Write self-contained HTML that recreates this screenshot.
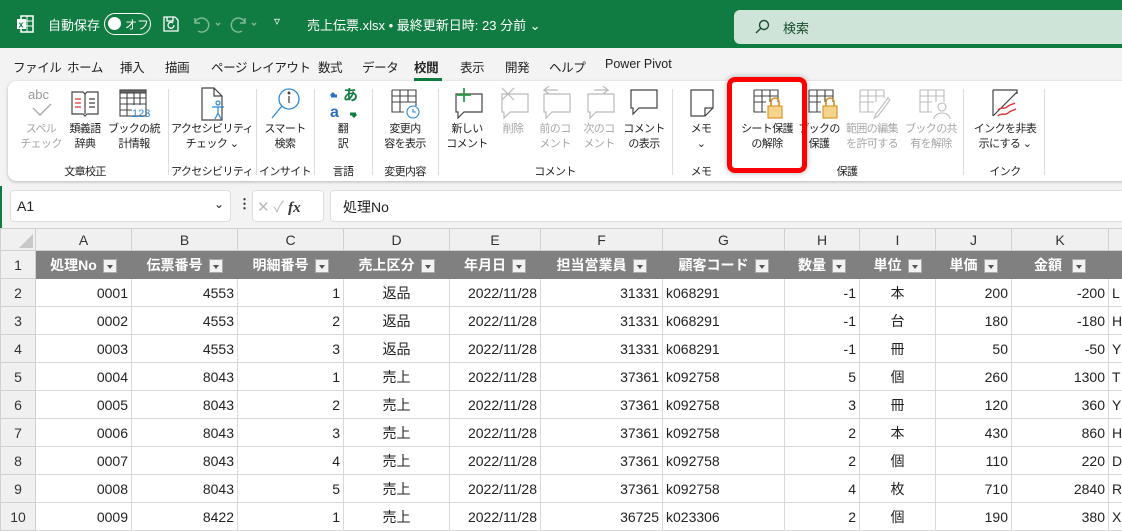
<!DOCTYPE html>
<html><head><meta charset="utf-8">
<style>
*{box-sizing:border-box;margin:0;padding:0}
body{width:1122px;height:530px;overflow:hidden;background:#f3f3f3;font-family:"Liberation Sans","Noto Sans CJK JP",sans-serif;position:relative;color:#222}
.abs{position:absolute}
#title{left:0;top:0;width:1122px;height:48px;background:#107c41;color:#fff;font-size:13px}
#tabs{left:0;top:48px;width:1122px;height:32px;font-size:12.5px;color:#222;letter-spacing:-0.4px}
#tabs span{position:absolute;top:9px}
#ribbon{left:8px;top:81px;width:1130px;height:100px;background:#fff;border-radius:8px;box-shadow:0 1px 3px rgba(0,0,0,.25)}
.btn{position:absolute;top:122px;font-size:11px;letter-spacing:-0.6px;line-height:15px;text-align:center;white-space:nowrap;transform:translateX(-50%);color:#222}
.g{color:#a6a6a6}
.grp{position:absolute;top:163px;font-size:11px;letter-spacing:-0.6px;transform:translateX(-50%);white-space:nowrap;color:#222}
.sep{position:absolute;top:89px;width:1px;height:86px;background:#ddd}
.ic{position:absolute;top:86px}
table{position:absolute;left:0;top:228px;width:1128px;border-collapse:collapse;table-layout:fixed;font-size:14px;background:#fff}
td{border:1px solid #d9d9d9;height:28px;padding:0 3px;white-space:nowrap;overflow:hidden;color:#222}
tr.ch td{height:22px;background:#f0f0f0;text-align:center;color:#333;border-color:#d0d0d0}
td.rh{background:#f0f0f0;text-align:center;color:#333;border-color:#d0d0d0}
tr.hd td.c{background:#808080;color:#fff;font-weight:bold;text-align:center;border-color:#808080}
.fb{display:inline-block;width:14px;height:14px;background:#f2f2f2;border:1px solid #aaa;vertical-align:middle;margin-left:6px;position:relative}
.fb:after{content:"";position:absolute;left:3px;top:5px;border-left:3px solid transparent;border-right:3px solid transparent;border-top:4px solid #555}
.r{text-align:right}.c2{text-align:center}
</style></head><body>
<div id="title" class="abs">
 <svg class="abs" style="left:16px;top:15px" width="18" height="18" viewBox="0 0 18 18"><rect x="5" y="1" width="12" height="16" fill="none" stroke="#fff" stroke-width="1.5"/><line x1="11" y1="1" x2="11" y2="17" stroke="#fff"/><line x1="5" y1="6" x2="17" y2="6" stroke="#fff"/><line x1="5" y1="11" x2="17" y2="11" stroke="#fff"/><rect x="1" y="4" width="9" height="10" fill="#fff"/><text x="2.5" y="12.5" font-size="9" font-weight="bold" fill="#107c41" font-family="Liberation Sans">x</text></svg>
 <span class="abs" style="left:48px;top:15px">自動保存</span>
 <div class="abs" style="left:104px;top:13px;width:47px;height:22px;border:1.5px solid #fff;border-radius:11px"><div class="abs" style="left:3px;top:3px;width:13px;height:13px;border-radius:50%;background:#fff"></div><span class="abs" style="left:20px;top:2px;font-size:12px">オフ</span></div>
 <svg class="abs" style="left:162px;top:15px" width="18" height="18" viewBox="0 0 18 18" fill="none" stroke="#fff" stroke-width="1.3"><path d="M2 2h11l3 3v11H2z"/><path d="M5 2v4h6V2"/><path d="M12 10a3 3 0 1 1-1-2"/></svg>
 <svg class="abs" style="left:192px;top:15px" width="30" height="18" viewBox="0 0 30 18" fill="none" stroke="#7fb898" stroke-width="1.5"><path d="M3 3v5h5"/><path d="M3 8a7 7 0 1 1 3 8"/><path d="M24 8l2 2 2-2"/></svg>
 <svg class="abs" style="left:230px;top:15px" width="30" height="18" viewBox="0 0 30 18" fill="none" stroke="#7fb898" stroke-width="1.5"><path d="M15 3v5h-5"/><path d="M15 8a7 7 0 1 0-3 8"/><path d="M22 8l2 2 2-2"/></svg>
 <span class="abs" style="left:274px;top:14px;font-size:12px">▿</span>
 <span class="abs" style="left:307px;top:15px">売上伝票.xlsx • 最終更新日時: 23 分前 ⌄</span>
 <div class="abs" style="left:734px;top:10px;width:400px;height:34px;background:#cfe4d8;border-radius:6px;color:#1a4d2e">
  <svg class="abs" style="left:20px;top:9px" width="16" height="16" viewBox="0 0 16 16" fill="none" stroke="#1a4d2e" stroke-width="1.4"><circle cx="10" cy="6" r="4.5"/><line x1="6.8" y1="9.2" x2="2" y2="14"/></svg>
  <span class="abs" style="left:49px;top:8px;font-size:13px">検索</span>
 </div>
</div>
<div id="tabs" class="abs">
 <span style="left:13px">ファイル</span><span style="left:67px">ホーム</span><span style="left:120px">挿入</span><span style="left:165px">描画</span><span style="left:211px">ページ レイアウト</span><span style="left:318px">数式</span><span style="left:362px">データ</span><span style="left:414px;font-weight:bold">校閲</span><span style="left:460px">表示</span><span style="left:505px">開発</span><span style="left:549px">ヘルプ</span><span style="left:605px;letter-spacing:0">Power Pivot</span>
 <div class="abs" style="left:414px;top:30px;width:28px;height:3px;background:#107c41"></div>
</div>
<div id="ribbon" class="abs"></div>
<svg class="ic" style="left:27px" width="30" height="34" viewBox="0 0 30 34"><text x="1" y="13" font-size="13" fill="#999" font-family="Liberation Sans">abc</text><path d="M6 22l7 7 11-11" fill="none" stroke="#aaa" stroke-width="1.4"/></svg>
<svg class="ic" style="left:70px" width="30" height="34" viewBox="0 0 30 34" fill="none" stroke="#444" stroke-width="1.2"><path d="M2 6h11l2 2 2-2h11v22H17l-2 2-2-2H2z"/><line x1="15" y1="8" x2="15" y2="28"/><path d="M5 13h6M5 17h6M5 21h6" stroke="#d33"/><path d="M19 13h6M19 17h6M19 21h6"/></svg>
<svg class="ic" style="left:118px" width="32" height="34" viewBox="0 0 32 34" fill="none" stroke="#444" stroke-width="1.1"><rect x="2" y="4" width="26" height="26"/><rect x="2" y="4" width="26" height="3" fill="#666"/><path d="M2 12h26M2 18h26M2 24h12M9 7v23M16 7v12M22 7v12"/><text x="14" y="31" font-size="11" fill="#2b8ad6" stroke="none" font-family="Liberation Sans">123</text></svg>
<svg class="ic" style="left:198px" width="30" height="36" viewBox="0 0 30 36" fill="none" stroke="#444" stroke-width="1.2"><path d="M4 2h12l8 8v24H4z"/><path d="M16 2v8h8"/><g stroke="#2b8ad6"><circle cx="20" cy="17" r="2"/><path d="M14 21h12M20 21v6l-3 6M20 27l3 6"/></g></svg>
<svg class="ic" style="left:270px" width="32" height="36" viewBox="0 0 32 36" fill="none" stroke="#2b8ad6" stroke-width="1.3"><circle cx="19" cy="13" r="10"/><line x1="12" y1="20" x2="2" y2="32"/><line x1="19" y1="10" x2="19" y2="17" stroke="#444"/><circle cx="19" cy="7" r=".8" fill="#444" stroke="#444"/></svg>
<svg class="ic" style="left:328px" width="32" height="34" viewBox="0 0 32 34"><text x="15" y="14" font-size="15" fill="#107c41" font-weight="bold" font-family="Noto Sans CJK JP">あ</text><text x="2" y="31" font-size="16" fill="#2b6fc6" font-weight="bold" font-family="Liberation Sans">a</text><path d="M3 10l6 0M3 10l3-3" stroke="#2b6fc6" stroke-width="3" fill="none"/><path d="M28 28l-6 0M28 28l-3 3" stroke="#107c41" stroke-width="3" fill="none"/></svg>
<svg class="ic" style="left:390px" width="32" height="34" viewBox="0 0 32 34" fill="none" stroke="#444" stroke-width="1.1"><path d="M2 4h24v16M2 4v22h12"/><path d="M2 10h24M2 16h24M10 4v22M18 4v12"/><circle cx="23" cy="26" r="6" stroke="#2b8ad6"/><path d="M23 23v3h3" stroke="#2b8ad6"/></svg>
<svg class="ic" style="left:452px" width="32" height="34" viewBox="0 0 32 34" fill="none" stroke="#444" stroke-width="1.2"><path d="M4 8h26v18H12l-6 6v-6H4z"/><path d="M12 2v14M5 9h14" stroke="#2a9d4a" stroke-width="1.8"/></svg>
<svg class="ic" style="left:498px" width="32" height="34" viewBox="0 0 32 34" fill="none" stroke="#bbb" stroke-width="1.2"><path d="M4 8h26v18H12l-6 6v-6H4z"/><path d="M4 2l12 12M16 2L4 14"/></svg>
<svg class="ic" style="left:540px" width="32" height="34" viewBox="0 0 32 34" fill="none" stroke="#bbb" stroke-width="1.2"><path d="M4 8h26v18H12l-6 6v-6H4z"/><path d="M18 4H4l5-4M4 4l5 4"/></svg>
<svg class="ic" style="left:584px" width="32" height="34" viewBox="0 0 32 34" fill="none" stroke="#bbb" stroke-width="1.2"><path d="M4 8h26v18H12l-6 6v-6H4z"/><path d="M10 4h14l-5-4M24 4l-5 4"/></svg>
<svg class="ic" style="left:628px" width="32" height="34" viewBox="0 0 32 34" fill="none" stroke="#444" stroke-width="1.2"><path d="M3 4h26v18H11l-6 6v-6H3z"/></svg>
<svg class="ic" style="left:688px" width="28" height="34" viewBox="0 0 28 34" fill="none" stroke="#444" stroke-width="1.2"><path d="M3 4h22v18l-8 8H3z"/><path d="M25 22h-8v8"/></svg>
<svg class="ic" style="left:752px" width="34" height="36" viewBox="0 0 34 36" fill="none" stroke="#444" stroke-width="1.1"><path d="M2 4h24v12M2 4v22h12"/><path d="M2 10h24M2 16h12M10 4v22M18 4v12"/><rect x="16" y="20" width="14" height="12" fill="#f5d58e" stroke="#d9901b"/><path d="M19 20v-4a4 4 0 0 1 8 0v4" stroke="#d9901b" stroke-width="1.6"/></svg>
<svg class="ic" style="left:807px" width="34" height="36" viewBox="0 0 34 36" fill="none" stroke="#444" stroke-width="1.1"><path d="M2 4h24v12M2 4v22h12"/><path d="M2 10h24M2 16h12M10 4v22M18 4v12"/><rect x="16" y="20" width="14" height="12" fill="#f5d58e" stroke="#d9901b"/><path d="M19 20v-4a4 4 0 0 1 8 0v4" stroke="#d9901b" stroke-width="1.6"/></svg>
<svg class="ic" style="left:858px" width="34" height="36" viewBox="0 0 34 36" fill="none" stroke="#bbb" stroke-width="1.1"><path d="M2 4h24v8M2 4v22h14"/><path d="M2 10h24M2 16h14M10 4v22M18 4v12"/><path d="M30 12L18 28l-2 4 4-2 12-16z"/></svg>
<svg class="ic" style="left:918px" width="34" height="36" viewBox="0 0 34 36" fill="none" stroke="#bbb" stroke-width="1.1"><path d="M2 4h24v12M2 4v22h12"/><path d="M2 10h24M2 16h12M10 4v22M18 4v12"/><circle cx="24" cy="21" r="4"/><path d="M16 33a8 6 0 0 1 16 0"/></svg>
<svg class="ic" style="left:990px" width="32" height="36" viewBox="0 0 32 36" fill="none" stroke-width="1.2"><path d="M3 4h24v4M3 4v26" stroke="#444"/><path d="M3 30L27 6" stroke="#444"/><path d="M8 24c4-4 6 0 9-3s5-2 8-4M8 30c4-4 7 0 10-3s5-2 8-4" stroke="#e0393e" stroke-width="1.5"/></svg>
<div class="btn g" style="left:41px">スペル<br>チェック</div>
<div class="btn" style="left:85px">類義語<br>辞典</div>
<div class="btn" style="left:134px">ブックの統<br>計情報</div>
<div class="btn" style="left:212px">アクセシビリティ<br>チェック ⌄</div>
<div class="btn" style="left:285px">スマート<br>検索</div>
<div class="btn" style="left:343px">翻<br>訳</div>
<div class="btn" style="left:405px">変更内<br>容を表示</div>
<div class="btn" style="left:467px">新しい<br>コメント</div>
<div class="btn g" style="left:513px">削除<br>&nbsp;</div>
<div class="btn g" style="left:555px">前のコ<br>メント</div>
<div class="btn g" style="left:599px">次のコ<br>メント</div>
<div class="btn" style="left:644px">コメント<br>の表示</div>
<div class="btn" style="left:701px">メモ<br>⌄</div>
<div class="btn" style="left:767px">シート保護<br>の解除</div>
<div class="btn" style="left:819px">ブックの<br>保護</div>
<div class="btn g" style="left:872px">範囲の編集<br>を許可する</div>
<div class="btn g" style="left:931px">ブックの共<br>有を解除</div>
<div class="btn" style="left:1005px">インクを非表<br>示にする ⌄</div>
<div class="grp" style="left:85px">文章校正</div>
<div class="grp" style="left:212px">アクセシビリティ</div>
<div class="grp" style="left:285px">インサイト</div>
<div class="grp" style="left:343px">言語</div>
<div class="grp" style="left:405px">変更内容</div>
<div class="grp" style="left:555px">コメント</div>
<div class="grp" style="left:701px">メモ</div>
<div class="grp" style="left:847px">保護</div>
<div class="grp" style="left:1005px">インク</div>
<div class="sep" style="left:168px"></div><div class="sep" style="left:256px"></div><div class="sep" style="left:314px"></div><div class="sep" style="left:372px"></div><div class="sep" style="left:438px"></div><div class="sep" style="left:672px"></div><div class="sep" style="left:963px"></div><div class="sep" style="left:1044px"></div>
<div class="abs" style="left:727px;top:77px;width:80px;height:96px;border:5px solid #f00;border-radius:8px;box-shadow:0 0 6px rgba(0,0,0,.3)"></div>
<div class="abs" style="left:10px;top:190px;width:221px;height:32px;background:#fff;border:1px solid #ddd;border-radius:4px;font-size:14px;padding:7px 6px">A1<span style="position:absolute;right:6px;top:6px;font-size:12px">⌄</span></div>
<div class="abs" style="left:238px;top:196px;font-size:13px;font-weight:bold">⋮</div>
<div class="abs" style="left:252px;top:190px;width:72px;height:32px;background:#fff;border:1px solid #ddd;border-radius:4px;font-size:15px;color:#bbb;padding:5px 4px">✕ ✓ <i style="color:#333;font-family:'Liberation Serif';font-weight:bold">fx</i></div>
<div class="abs" style="left:330px;top:190px;width:800px;height:32px;background:#fff;border:1px solid #ddd;border-radius:4px;font-size:14px;padding:6px 12px">処理No</div>
<div class="abs" style="left:0;top:186px;width:2px;height:344px;background:#107c41"></div>
<table>
<colgroup><col style="width:35px"><col style="width:96px"><col style="width:106px"><col style="width:106px"><col style="width:106px"><col style="width:91px"><col style="width:122px"><col style="width:122px"><col style="width:75px"><col style="width:76px"><col style="width:76px"><col style="width:97px"><col style="width:20px"></colgroup>
<tr class="ch"><td style="position:relative"><div style="position:absolute;right:2px;bottom:2px;border-left:14px solid transparent;border-bottom:14px solid #c8c8c8"></div></td><td>A</td><td>B</td><td>C</td><td>D</td><td>E</td><td>F</td><td>G</td><td>H</td><td>I</td><td>J</td><td>K</td><td></td></tr>
<tr class="hd"><td class="rh">1</td><td class="c">処理No<span class="fb"></span></td><td class="c">伝票番号<span class="fb"></span></td><td class="c">明細番号<span class="fb"></span></td><td class="c">売上区分<span class="fb"></span></td><td class="c">年月日<span class="fb"></span></td><td class="c">担当営業員<span class="fb"></span></td><td class="c">顧客コード<span class="fb"></span></td><td class="c">数量<span class="fb"></span></td><td class="c">単位<span class="fb"></span></td><td class="c">単価<span class="fb"></span></td><td class="c">金額 <span class="fb"></span></td><td class="c"></td></tr>
<tr><td class="rh">2</td><td class="r">0001</td><td class="r">4553</td><td class="r">1</td><td class="c2">返品</td><td class="r">2022/11/28</td><td class="r">31331</td><td>k068291</td><td class="r">-1</td><td class="c2">本</td><td class="r">200</td><td class="r">-200</td><td>L</td></tr>
<tr><td class="rh">3</td><td class="r">0002</td><td class="r">4553</td><td class="r">2</td><td class="c2">返品</td><td class="r">2022/11/28</td><td class="r">31331</td><td>k068291</td><td class="r">-1</td><td class="c2">台</td><td class="r">180</td><td class="r">-180</td><td>H</td></tr>
<tr><td class="rh">4</td><td class="r">0003</td><td class="r">4553</td><td class="r">3</td><td class="c2">返品</td><td class="r">2022/11/28</td><td class="r">31331</td><td>k068291</td><td class="r">-1</td><td class="c2">冊</td><td class="r">50</td><td class="r">-50</td><td>Y</td></tr>
<tr><td class="rh">5</td><td class="r">0004</td><td class="r">8043</td><td class="r">1</td><td class="c2">売上</td><td class="r">2022/11/28</td><td class="r">37361</td><td>k092758</td><td class="r">5</td><td class="c2">個</td><td class="r">260</td><td class="r">1300</td><td>T</td></tr>
<tr><td class="rh">6</td><td class="r">0005</td><td class="r">8043</td><td class="r">2</td><td class="c2">売上</td><td class="r">2022/11/28</td><td class="r">37361</td><td>k092758</td><td class="r">3</td><td class="c2">冊</td><td class="r">120</td><td class="r">360</td><td>Y</td></tr>
<tr><td class="rh">7</td><td class="r">0006</td><td class="r">8043</td><td class="r">3</td><td class="c2">売上</td><td class="r">2022/11/28</td><td class="r">37361</td><td>k092758</td><td class="r">2</td><td class="c2">本</td><td class="r">430</td><td class="r">860</td><td>H</td></tr>
<tr><td class="rh">8</td><td class="r">0007</td><td class="r">8043</td><td class="r">4</td><td class="c2">売上</td><td class="r">2022/11/28</td><td class="r">37361</td><td>k092758</td><td class="r">2</td><td class="c2">個</td><td class="r">110</td><td class="r">220</td><td>D</td></tr>
<tr><td class="rh">9</td><td class="r">0008</td><td class="r">8043</td><td class="r">5</td><td class="c2">売上</td><td class="r">2022/11/28</td><td class="r">37361</td><td>k092758</td><td class="r">4</td><td class="c2">枚</td><td class="r">710</td><td class="r">2840</td><td>R</td></tr>
<tr><td class="rh">10</td><td class="r">0009</td><td class="r">8422</td><td class="r">1</td><td class="c2">売上</td><td class="r">2022/11/28</td><td class="r">36725</td><td>k023306</td><td class="r">2</td><td class="c2">個</td><td class="r">190</td><td class="r">380</td><td>X</td></tr>
</table>
</body></html>
